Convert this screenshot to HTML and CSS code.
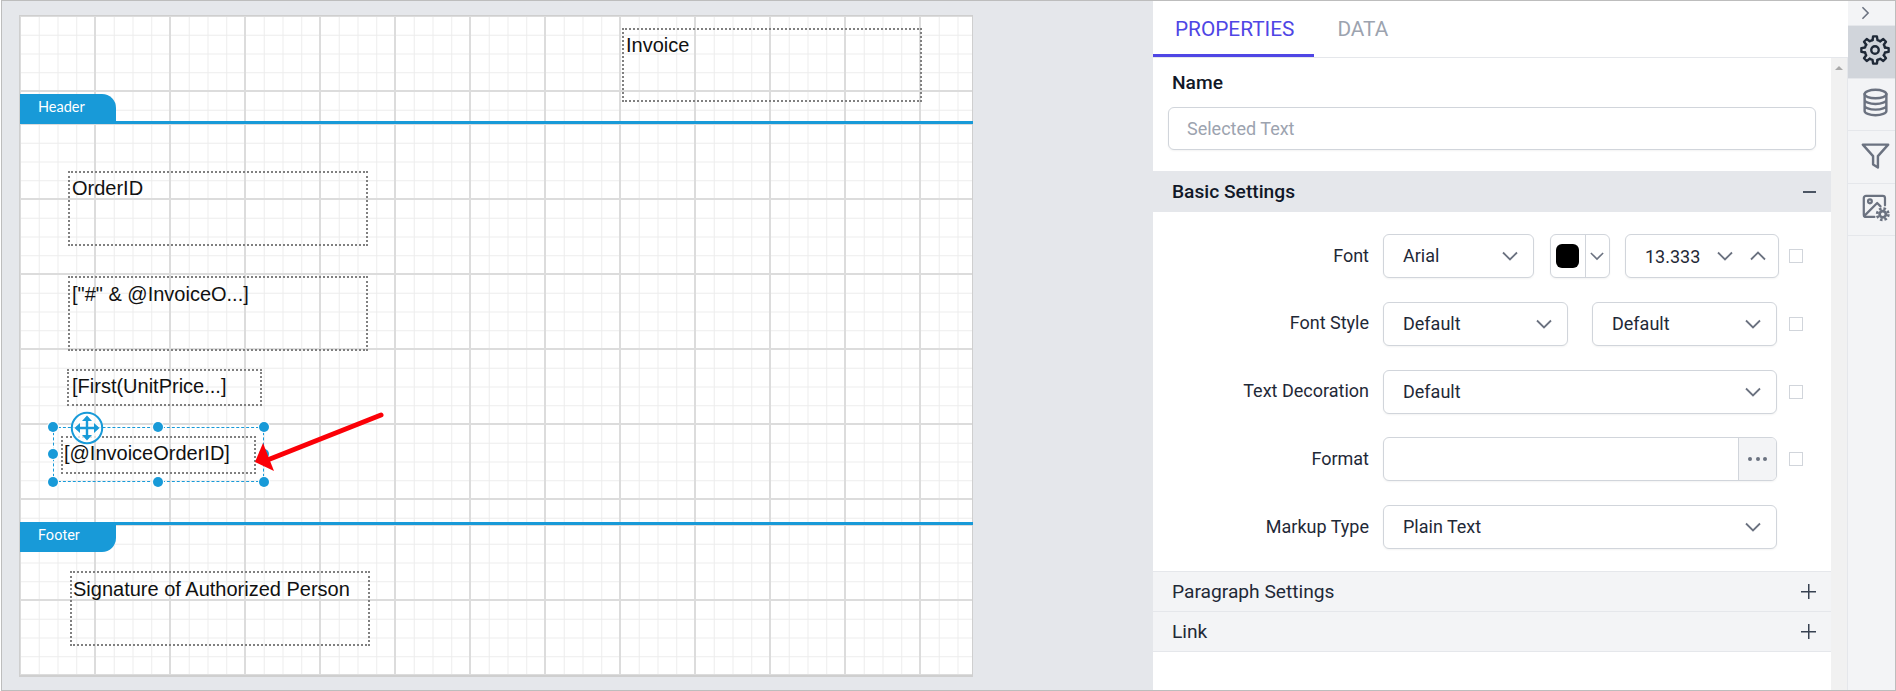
FILE: index.html
```html
<!DOCTYPE html>
<html lang="en">
<head>
<meta charset="utf-8">
<title>Report designer</title>
<link rel="stylesheet" href="styles.css">
</head>
<body>
<div class="app">
  <main class="stage">
    <div class="canvas">
      <section class="band band-top"></section>
      <div class="divider"><span class="tab tab-header">Header</span></div>
      <section class="band band-body"></section>
      <div class="divider"><span class="tab tab-footer">Footer</span></div>
      <section class="band band-foot"></section>

      <div class="tbox b-invoice">Invoice</div>
      <div class="tbox b-order">OrderID</div>
      <div class="tbox b-expr">["#" &amp; @InvoiceO...]</div>
      <div class="tbox b-first">[First(UnitPrice...]</div>
      <div class="tbox b-selected">[@InvoiceOrderID]</div>
      <div class="tbox b-sign">Signature of Authorized Person</div>

      <div class="selection">
        <i class="h h-tl"></i><i class="h h-tc"></i><i class="h h-tr"></i>
        <i class="h h-ml"></i><i class="h h-mr"></i>
        <i class="h h-bl"></i><i class="h h-bc"></i><i class="h h-br"></i>
      </div>
      <svg class="move" viewBox="0 0 34 34" aria-hidden="true">
        <circle cx="17" cy="17" r="15.2" fill="#fff" fill-opacity=".75" stroke="#189ad8" stroke-width="2"/>
        <path d="M17 6v22M6 17h22" stroke="#189ad8" stroke-width="2.4" fill="none"/>
        <path d="M17 4.500l-5 5.500h10zM17 29.500l-5-5.500h10zM4.500 17l5.500-5v10zM29.500 17l-5.500-5v10z" fill="#189ad8"/>
      </svg>
      <svg class="arrow" viewBox="0 0 140 70" aria-hidden="true">
        <path d="M129 5L18 49" stroke="#fb0007" stroke-width="5" stroke-linecap="round" fill="none"/>
        <path d="M3 52L11 33L22 61z" fill="#fb0007"/>
      </svg>
    </div>
  </main>

  <aside class="panel">
    <nav class="tabs">
      <a class="tabitem active">PROPERTIES</a>
      <a class="tabitem">DATA</a>
    </nav>
    <div class="scrollwrap">
      <div class="content">
        <div class="namewrap">
          <div class="label-strong">Name</div>
          <div class="field name-input">Selected Text</div>
        </div>
        <div class="accordion open"><span>Basic Settings</span><span class="minus"></span></div>
        <div class="rows">
          <div class="row">
            <label>Font</label>
            <div class="controls">
              <div class="field select w-font"><span>Arial</span><svg class="chev" viewBox="0 0 16 10"><path d="M1 1.500l7 7 7-7"/></svg></div>
              <div class="field color"><span class="swatchcell"><span class="swatch"></span></span><span class="colorarrow"><svg class="chev small" viewBox="0 0 16 10"><path d="M1 1.500l7 7 7-7"/></svg></span></div>
              <div class="field number"><span class="numval">13.333</span><svg class="chev" viewBox="0 0 16 10"><path d="M1 1.500l7 7 7-7"/></svg><svg class="chev" viewBox="0 0 16 10"><path d="M1 8.500l7-7 7 7"/></svg></div>
            </div>
            <span class="check"></span>
          </div>
          <div class="row">
            <label>Font Style</label>
            <div class="controls wide-gap">
              <div class="field select grow"><span>Default</span><svg class="chev" viewBox="0 0 16 10"><path d="M1 1.500l7 7 7-7"/></svg></div>
              <div class="field select grow"><span>Default</span><svg class="chev" viewBox="0 0 16 10"><path d="M1 1.500l7 7 7-7"/></svg></div>
            </div>
            <span class="check"></span>
          </div>
          <div class="row">
            <label>Text Decoration</label>
            <div class="controls">
              <div class="field select grow"><span>Default</span><svg class="chev" viewBox="0 0 16 10"><path d="M1 1.500l7 7 7-7"/></svg></div>
            </div>
            <span class="check"></span>
          </div>
          <div class="row">
            <label>Format</label>
            <div class="controls">
              <div class="field format"><span class="fmt-input"></span><span class="fmt-btn"><i></i><i></i><i></i></span></div>
            </div>
            <span class="check"></span>
          </div>
          <div class="row">
            <label>Markup Type</label>
            <div class="controls">
              <div class="field select grow"><span>Plain Text</span><svg class="chev" viewBox="0 0 16 10"><path d="M1 1.500l7 7 7-7"/></svg></div>
            </div>
            <span class="check hidden"></span>
          </div>
        </div>
        <div class="accordion closed first"><span>Paragraph Settings</span><span class="plus"></span></div>
        <div class="accordion closed"><span>Link</span><span class="plus"></span></div>
      </div>
      <div class="scrollbar"><span class="scrollup"></span></div>
    </div>
  </aside>

  <nav class="rail">
    <div class="rail-top"><svg class="rail-chev" viewBox="0 0 10 16"><path d="M1.500 1.500L8 8l-6.500 6.500"/></svg></div>
    <div class="rail-item selected">
      <svg class="ico dark" viewBox="0 0 24 24">
        <defs><path id="tooth" d="M10.020 4.050L10.470 1.100H13.530L13.980 4.050A8.200 8.200 0 0 1 16.220 4.970"/></defs>
        <use href="#tooth"/>
        <use href="#tooth" transform="rotate(45 12 12)"/>
        <use href="#tooth" transform="rotate(90 12 12)"/>
        <use href="#tooth" transform="rotate(135 12 12)"/>
        <use href="#tooth" transform="rotate(180 12 12)"/>
        <use href="#tooth" transform="rotate(225 12 12)"/>
        <use href="#tooth" transform="rotate(270 12 12)"/>
        <use href="#tooth" transform="rotate(315 12 12)"/>
        <circle cx="12" cy="12" r="3"/>
      </svg>
    </div>
    <div class="rail-item">
      <svg class="ico" viewBox="0 0 24 24"><ellipse cx="12" cy="5" rx="9" ry="3.500"/><path d="M3 5v14c0 1.900 4 3.500 9 3.500s9-1.600 9-3.500V5M3 9.700c0 1.900 4 3.500 9 3.500s9-1.600 9-3.500M3 14.400c0 1.900 4 3.500 9 3.500s9-1.600 9-3.500"/></svg>
    </div>
    <div class="rail-item">
      <svg class="ico" viewBox="0 0 24 24"><path d="M1.500 3h21l-8.500 9.500V22l-4-2.500v-7z"/></svg>
    </div>
    <div class="rail-item">
      <svg class="ico" viewBox="0 0 26 26"><path d="M12 21.500H4.500a2 2 0 0 1-2-2v-15a2 2 0 0 1 2-2h15a2 2 0 0 1 2 2V11"/><circle cx="8" cy="7.500" r="1.700"/><path d="M3 20.500L14.500 9l3 3"/><circle class="gear-core" cx="19.500" cy="19" r="2.800"/><circle class="gear-teeth" cx="19.500" cy="19" r="5"/></svg>
    </div>
    <div class="rail-rest"></div>
  </nav>
</div>
</body>
</html>
```

FILE: styles.css
```css
* { box-sizing: border-box; }
html, body { margin: 0; height: 691px; overflow: hidden; background: #fff; }
body { padding-left: 1px; font-family: Roboto, "Liberation Sans", sans-serif; }

.app {
  display: flex;
  width: 1895px;
  height: 691px;
  border: 1px solid #bdbdbd;
  background: #e5e7eb;
}

/* designer canvas */
.stage { width: 1151px; flex: none; padding: 14px 0 0 17px; }
.canvas {
  position: relative;
  width: 954px;
  height: 662px;
  border: 1px solid #cfcfcf;
  border-bottom-width: 2px;
  background: #fff;
}
.band {
  background-color: #fff;
  background-image:
    linear-gradient(to right, #dcdcdc 2px, transparent 2px),
    linear-gradient(to bottom, #dcdcdc 2px, transparent 2px),
    linear-gradient(to right, #ececec 1px, transparent 1px),
    linear-gradient(to bottom, #ececec 1px, transparent 1px);
  background-size: 75px 75px, 75px 75px, 18.75px 18.75px, 18.75px 18.75px;
  background-position: 74px 0, 0 74px, 18.75px 0, 0 18.75px;
}
.band-top { height: 105px; }
.band-body { height: 398px; }
.band-foot { height: 150px; }
.divider { position: relative; height: 3px; background: #189ad8; margin-right: -1px; }
.tab {
  position: absolute;
  left: 0;
  width: 96px;
  height: 27px;
  background: #189ad8;
  color: #fff;
  font: 14.500px/26px Lato, Roboto, sans-serif;
  padding-left: 18px;
}
.tab-header { bottom: 3px; border-top-right-radius: 14px; }
.tab-footer { top: 3px; border-bottom-right-radius: 14px; font-family: Roboto, sans-serif; line-height: 21px; }

.tbox {
  position: absolute;
  border: 2px dotted #808080;
  color: #111;
  font: 20px/24px "Liberation Sans", Arial, sans-serif;
  padding: 3px 0 0 2px;
  white-space: nowrap;
}
.b-invoice { left: 602px; top: 12px; width: 300px; height: 74px; }
.b-order { left: 48px; top: 155px; width: 300px; height: 75px; }
.b-expr { left: 48px; top: 260px; width: 300px; height: 75px; padding-top: 4px; }
.b-first { left: 47px; top: 353px; width: 195px; height: 37px; padding-left: 3px; }
.b-selected { left: 41px; top: 420px; width: 195px; height: 38px; padding-left: 1px; padding-top: 3px; }
.b-sign { left: 50px; top: 555px; width: 300px; height: 75px; padding-left: 1px; padding-top: 4px; }

.selection {
  position: absolute;
  left: 33px;
  top: 411px;
  width: 211px;
  height: 55px;
  border: 1px dashed #189ad8;
}
.h {
  position: absolute;
  width: 10px;
  height: 10px;
  border-radius: 50%;
  background: #189ad8;
  box-shadow: 0 0 0 1px #fff;
}
.h-tl { left: -6px; top: -6px; }
.h-tc { left: 99px; top: -6px; }
.h-tr { right: -6px; top: -6px; }
.h-ml { left: -6px; top: 21px; }
.h-mr { right: -6px; top: 21px; }
.h-bl { left: -6px; bottom: -6px; }
.h-bc { left: 99px; bottom: -6px; }
.h-br { right: -6px; bottom: -6px; }
.move { position: absolute; left: 50px; top: 395px; width: 34px; height: 34px; }
.arrow { position: absolute; left: 232px; top: 394px; width: 140px; height: 70px; }

/* properties panel */
.panel { width: 695px; flex: none; background: #fff; display: flex; flex-direction: column; }
.tabs { display: flex; height: 57px; flex: none; border-bottom: 1px solid #e5e7eb; }
.tabitem {
  height: 56px;
  padding: 15px 20px 0 22px;
  font-size: 20.800px;
  line-height: 26px;
  color: #9ca3af;
}
.tabitem.active { color: #4f46e5; border-bottom: 3px solid #4f46e5; }
.tabitem + .tabitem { padding-left: 23px; }

.scrollwrap { flex: 1; display: flex; min-height: 0; }
.content { width: 678px; flex: none; }
.scrollbar { flex: 1; background: #f1f1f1; border-right: 1px solid #e5e7eb; position: relative; display: flex; justify-content: center; padding-top: 8px; }
.scrollup { width: 0; height: 0; border: 4px solid transparent; border-top: 0; border-bottom: 4px solid #a9a9a9; }

.namewrap { height: 113px; padding: 0 15px; }
.label-strong { font-size: 19.200px; line-height: 22px; font-weight: 500; color: #111827; padding: 14px 0 0 4px; }
.field {
  border: 1px solid #d1d5db;
  border-radius: 6px;
  box-shadow: 0 1px 2px rgba(0,0,0,.05);
  font-size: 18px;
  color: #1f2937;
  background: #fff;
}
.name-input {
  margin-top: 13px;
  height: 43px;
  line-height: 41px;
  padding-left: 18px;
  color: #9ca3af;
}

.accordion {
  display: flex;
  align-items: center;
  justify-content: space-between;
  padding: 0 15px 0 19px;
  font-size: 19.200px;
  color: #1f2937;
  background: #f3f4f6;
}
.accordion.open { height: 41px; background: #e5e7eb; font-weight: 500; color: #111827; }
.accordion.closed { height: 40px; border-bottom: 1px solid #e5e7eb; color: #1f2937; }
.accordion.first { border-top: 1px solid #e5e7eb; height: 41px; }
.minus { width: 13px; height: 2px; background: #4b5563; }
.plus {
  width: 15px;
  height: 15px;
  background:
    linear-gradient(#374151, #374151) center / 15px 1.500px no-repeat,
    linear-gradient(#374151, #374151) center / 1.500px 15px no-repeat;
}

.rows { display: flex; flex-direction: column; gap: 23.800px; padding: 22px 0 22px; }
.row { display: flex; align-items: center; height: 44px; }
.row label { width: 216px; text-align: right; font-size: 18px; color: #1f2937; flex: none; padding-bottom: 2px; }
.controls { width: 394px; margin-left: 14px; display: flex; gap: 15.500px; height: 100%; flex: none; }
.controls.wide-gap { gap: 24px; }
.controls .field { height: 100%; }
.select { display: flex; align-items: center; justify-content: space-between; padding: 0 15px 1px 19px; }
.select .chev { margin-top: 1px; }
.grow { flex: 1; min-width: 0; }
.w-font { width: 151px; flex: none; }
.chev { width: 16px; height: 10px; fill: none; stroke: #6b7280; stroke-width: 1.800; flex: none; }
.chev.small { width: 14px; }
.color { width: 60px; flex: none; display: flex; overflow: hidden; }
.swatchcell { width: 35px; display: flex; align-items: center; justify-content: center; border-right: 1px solid #d1d5db; }
.swatch { width: 23px; height: 24px; border-radius: 6px; background: #000; }
.colorarrow { flex: 1; display: flex; align-items: center; justify-content: center; }
.number { flex: 1; display: flex; align-items: center; gap: 17px; padding: 0 12px 0 19px; }
.format { flex: 1; display: flex; overflow: hidden; }
.fmt-input { flex: 1; }
.fmt-btn { width: 38px; background: #f3f4f6; border-left: 1px solid #d1d5db; display: flex; align-items: center; justify-content: center; gap: 3.500px; }
.fmt-btn i { width: 4px; height: 4px; border-radius: 50%; background: #6b7280; }
.check { width: 14px; height: 14px; margin-left: 12px; border: 1px solid #d1d5db; background: #fff; flex: none; }
.check.hidden { visibility: hidden; }

/* icon rail */
.rail { flex: 1; background: #f3f4f6; display: flex; flex-direction: column; }
.rail-top { height: 25px; display: flex; align-items: center; justify-content: center; border-bottom: 1px solid #e5e7eb; }
.rail-chev { width: 9px; height: 14px; fill: none; stroke: #6b7280; stroke-width: 1.800; margin-right: 13px; }
.rail-item { height: 52.500px; padding: 0 0 3px 7px; display: flex; align-items: center; justify-content: center; border-bottom: 1px solid #e5e7eb; flex: none; }
.rail-item.selected { background: #d1d5db; }
.rail-rest { flex: 1; }
.ico { width: 29px; height: 29px; fill: none; stroke: #6b7280; stroke-width: 2; stroke-linejoin: round; stroke-linecap: round; }
.ico.dark { stroke: #1f2937; stroke-width: 1.900; width: 30px; height: 30px; }
.gear-core { stroke-width: 2.400; }
.gear-teeth { stroke-width: 2.500; stroke-dasharray: 2.200 1.727; stroke-linecap: butt; }
```
